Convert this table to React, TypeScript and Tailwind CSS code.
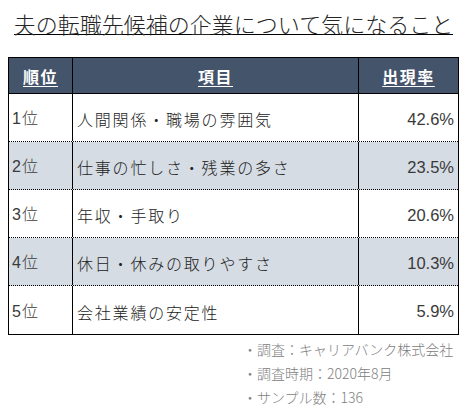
import React from "react";

const rows = [
  { rank: "1位", item: "人間関係・職場の雰囲気", pct: "42.6%", alt: false },
  { rank: "2位", item: "仕事の忙しさ・残業の多さ", pct: "23.5%", alt: true },
  { rank: "3位", item: "年収・手取り", pct: "20.6%", alt: false },
  { rank: "4位", item: "休日・休みの取りやすさ", pct: "10.3%", alt: true },
  { rank: "5位", item: "会社業績の安定性", pct: "5.9%", alt: false },
];

export default function App() {
  return (
    <div
      className="w-[467px] h-[411px] bg-white overflow-hidden"
      style={{ fontFamily: '"Noto Sans CJK JP", sans-serif' }}
    >
      <div className="pt-[12px] text-center">
        <span className="inline-block text-[22px] leading-[22px] font-light text-[#262626] border-b border-black">
          夫の転職先候補の企業について気になること
        </span>
      </div>

      <div className="mt-[19px] ml-[8px] w-[451px] border border-black">
        <div className="flex h-[36px] bg-[#44546a] text-white font-bold text-[16px] border-b border-black">
          <div className="w-[64px] border-r border-black flex items-center justify-center">
            <span className="underline underline-offset-[3px] tracking-[1.5px]">順位</span>
          </div>
          <div className="w-[286px] border-r border-black flex items-center justify-center">
            <span className="underline underline-offset-[3px] tracking-[1.5px]">項目</span>
          </div>
          <div className="flex-1 flex items-center justify-center">
            <span className="underline underline-offset-[3px] tracking-[1.5px]">出現率</span>
          </div>
        </div>
        {rows.map((r, i) => (
          <div
            key={r.rank}
            className={
              "flex h-[48px] text-[16px] font-light text-[#222] " +
              (r.alt ? "bg-[#d6dce4] " : "bg-white ") +
              (i < rows.length - 1 ? "border-b border-dotted border-black" : "")
            }
          >
            <div
              className="w-[64px] border-r border-black flex items-center pl-[3px] pt-[3px] tracking-[1px]"
              style={{ fontFamily: '"Liberation Sans", "Noto Sans CJK JP", sans-serif' }}
            >
              <span className="text-[#3a3a3a]">{r.rank}</span>
            </div>
            <div className="w-[286px] border-r border-black flex items-center pl-[4px] pt-[3px] tracking-[1.8px]">
              {r.item}
            </div>
            <div
              className="flex-1 flex items-center justify-end pr-[4px] pt-[3px] text-[16.5px] font-normal text-[#3a3a3a]"
              style={{ fontFamily: '"Liberation Sans", sans-serif' }}
            >
              {r.pct}
            </div>
          </div>
        ))}
      </div>

      <div className="mt-[2px] pl-[243px] text-[14px] leading-[24px] font-light text-[#808080]">
        <div>・調査：キャリアバンク株式会社</div>
        <div>・調査時期：2020年8月</div>
        <div>・サンプル数：136</div>
      </div>
    </div>
  );
}
